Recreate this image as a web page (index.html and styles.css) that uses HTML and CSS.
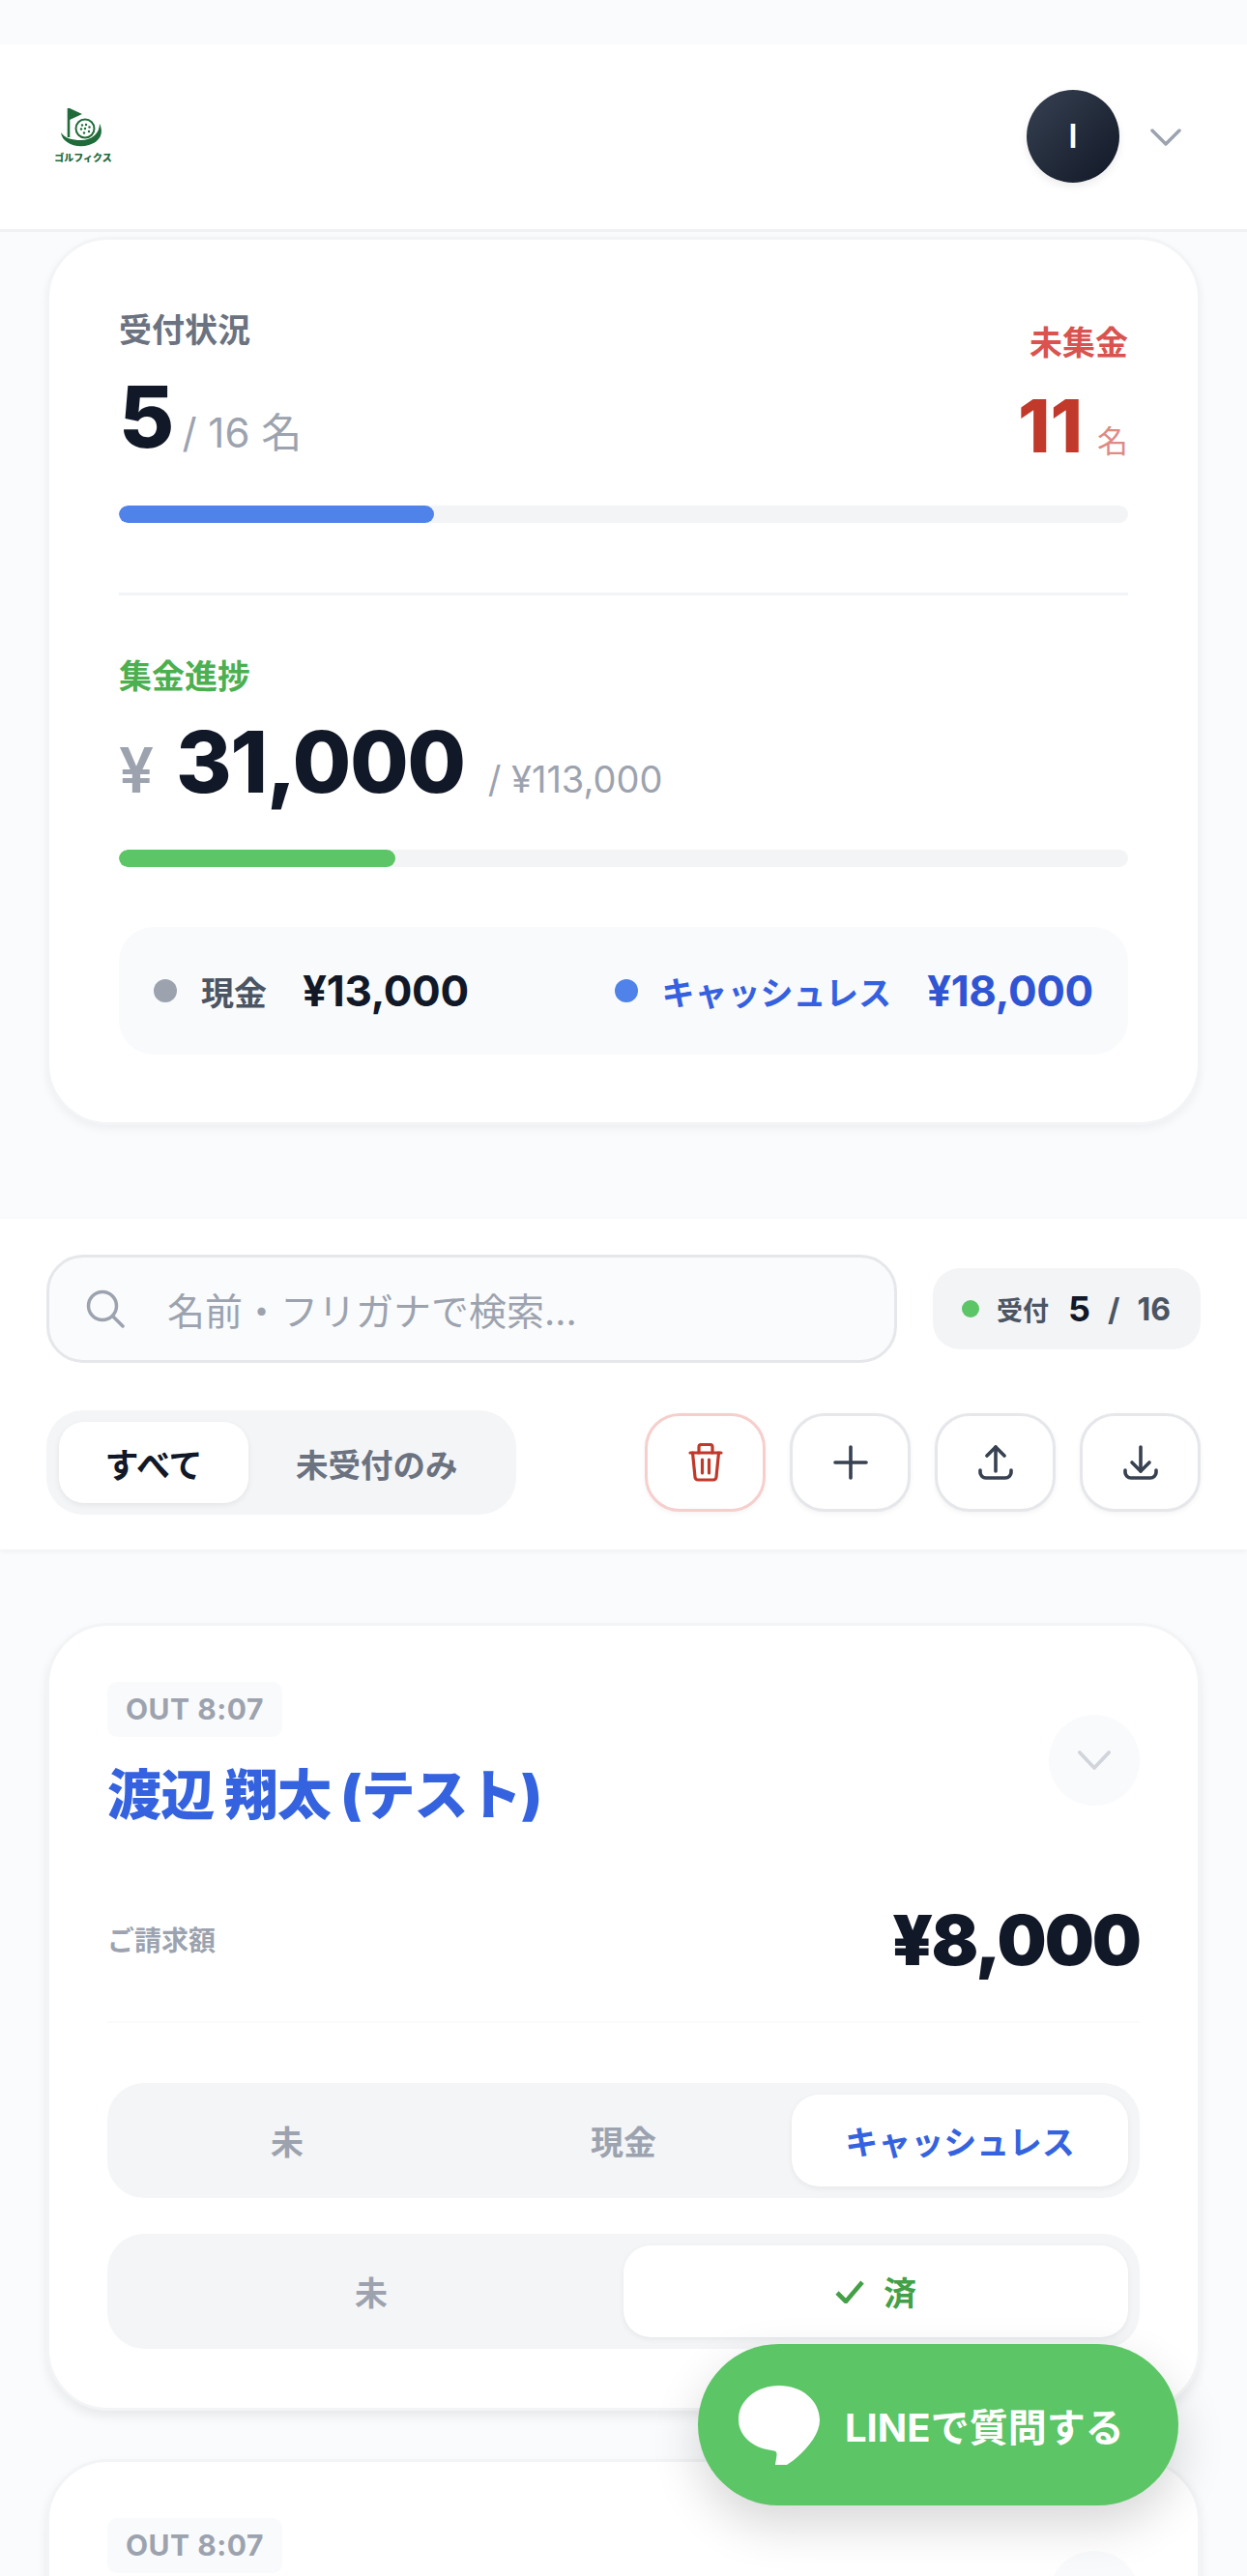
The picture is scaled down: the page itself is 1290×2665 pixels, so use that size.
FILE: index.html
```html
<!DOCTYPE html>
<html lang="ja">
<head>
    <meta charset="UTF-8">
    <meta name="viewport" content="width=device-width, initial-scale=1.0">
    <title>受付管理</title>
    <link rel="stylesheet" href="styles.css">
</head>
<body>
    <header class="site-header">
        <div class="logo">
            <svg class="logo-mark" viewBox="0 0 54 42" width="54" height="42">
                <path d="M12 0 L12 30" stroke="#1f6b3a" stroke-width="2.6" fill="none"/>
                <path d="M13 0 L26 6 L13 12 Z" fill="#1f6b3a"/>
                <circle cx="29" cy="21" r="9.5" fill="#fff" stroke="#1f6b3a" stroke-width="2"/>
                <g fill="#1f6b3a">
                    <circle cx="26" cy="17.5" r="1.2"/><circle cx="30" cy="17" r="1.2"/><circle cx="33.5" cy="19.5" r="1.2"/>
                    <circle cx="25" cy="21.5" r="1.2"/><circle cx="29" cy="21" r="1.2"/><circle cx="33" cy="24" r="1.2"/>
                    <circle cx="28" cy="25.5" r="1.2"/>
                </g>
                <path d="M4 25 C5 36 20 42 33 38 C44 35 49 26 44 16 C44 26 36 33 25 33 C15 33 8 31 4 25 Z" fill="#1f6b3a"/>
            </svg>
            <span class="logo-text">ゴルフィクス</span>
        </div>
        <div class="user-menu">
            <div class="avatar">I</div>
            <svg class="user-chevron" viewBox="0 0 32 18" width="32" height="18">
                <path d="M2 2 L16 16 L30 2" stroke="#9ca3af" stroke-width="3.5" fill="none" stroke-linecap="round" stroke-linejoin="round"/>
            </svg>
        </div>
    </header>

    <section class="summary-card">
        <div class="summary-top">
            <div>
                <div class="label label-gray">受付状況</div>
                <div class="count-line"><span class="count-big">5</span><span class="count-sub">/ 16 名</span></div>
            </div>
            <div class="unpaid">
                <div class="label label-red">未集金</div>
                <div class="count-line"><span class="unpaid-big">11</span><span class="unpaid-unit">名</span></div>
            </div>
        </div>
        <div class="bar"><div class="bar-fill bar-blue" style="width: 31.25%"></div></div>
        <div class="summary-divider"></div>
        <div class="label label-green">集金進捗</div>
        <div class="money-line">
            <span class="money-yen">¥</span><span class="money-big">31,000</span><span class="money-sub">/ ¥113,000</span>
        </div>
        <div class="bar"><div class="bar-fill bar-green" style="width: 27.4%"></div></div>
        <div class="breakdown">
            <div class="breakdown-item">
                <span class="dot dot-gray"></span><span class="breakdown-name">現金</span><span class="breakdown-value">¥13,000</span>
            </div>
            <div class="breakdown-item blue">
                <span class="dot dot-blue"></span><span class="breakdown-name">キャッシュレス</span><span class="breakdown-value">¥18,000</span>
            </div>
        </div>
    </section>

    <section class="toolbar">
        <div class="toolbar-row">
            <div class="search">
                <svg viewBox="0 0 40 40" width="40" height="40">
                    <circle cx="17" cy="17" r="14.5" stroke="#9ca3af" stroke-width="3.5" fill="none"/>
                    <path d="M28 28 L38 38" stroke="#9ca3af" stroke-width="3.5" stroke-linecap="round"/>
                </svg>
                <span class="search-text">名前・フリガナで検索...</span>
            </div>
            <div class="status-pill">
                <span class="status-dot"></span>
                <span class="status-label">受付</span>
                <span class="status-num">5</span>
                <span class="status-total">/</span>
                <span class="status-total">16</span>
            </div>
        </div>
        <div class="toolbar-row toolbar-row-2">
            <div class="filter">
                <div class="filter-item active">すべて</div>
                <div class="filter-item">未受付のみ</div>
            </div>
            <div class="icon-buttons">
                <div class="icon-btn danger">
                    <svg viewBox="0 0 36 40" width="36" height="40" fill="none" stroke="#c0392b" stroke-width="3.2" stroke-linecap="round" stroke-linejoin="round">
                        <path d="M2 10 H34"/>
                        <path d="M11 10 V4 a2.5 2.5 0 0 1 2.5-2.5 h9 a2.5 2.5 0 0 1 2.5 2.5 V10"/>
                        <path d="M4.5 10 L7 35 a3 3 0 0 0 3 3 H26 a3 3 0 0 0 3-3 L31.5 10"/>
                        <path d="M14.5 17 V31"/>
                        <path d="M21.5 17 V31"/>
                    </svg>
                </div>
                <div class="icon-btn">
                    <svg viewBox="0 0 36 36" width="36" height="36" fill="none" stroke="#374151" stroke-width="3.6" stroke-linecap="round">
                        <path d="M18 2 V34"/>
                        <path d="M2 18 H34"/>
                    </svg>
                </div>
                <div class="icon-btn">
                    <svg viewBox="0 0 36 36" width="36" height="36" fill="none" stroke="#374151" stroke-width="3.6" stroke-linecap="round" stroke-linejoin="round">
                        <path d="M18 27 V2"/>
                        <path d="M9 11 L18 2 L27 11"/>
                        <path d="M2 26 v2 a6 6 0 0 0 6 6 h20 a6 6 0 0 0 6-6 v-2"/>
                    </svg>
                </div>
                <div class="icon-btn">
                    <svg viewBox="0 0 36 36" width="36" height="36" fill="none" stroke="#374151" stroke-width="3.6" stroke-linecap="round" stroke-linejoin="round">
                        <path d="M18 2 V27"/>
                        <path d="M9 18 L18 27 L27 18"/>
                        <path d="M2 26 v2 a6 6 0 0 0 6 6 h20 a6 6 0 0 0 6-6 v-2"/>
                    </svg>
                </div>
            </div>
        </div>
    </section>

    <main class="player-list">
        <article class="player-card">
            <div class="player-head">
                <div>
                    <span class="tee-tag">OUT 8:07</span>
                    <h2 class="player-name">渡辺 翔太 (テスト)</h2>
                </div>
                <div class="expand">
                    <svg viewBox="0 0 36 22" width="34" height="21">
                        <path d="M2 2 L18 19 L34 2" stroke="#d1d5db" stroke-width="4" fill="none" stroke-linecap="round" stroke-linejoin="round"/>
                    </svg>
                </div>
            </div>
            <div class="bill-row">
                <span class="bill-label">ご請求額</span>
                <span class="bill-amount">¥8,000</span>
            </div>
            <div class="seg seg-three">
                <div class="seg-item">未</div>
                <div class="seg-item">現金</div>
                <div class="seg-item active blue-text">キャッシュレス</div>
            </div>
            <div class="seg seg-two">
                <div class="seg-item dim">未</div>
                <div class="seg-item active green-text">
                    <svg viewBox="0 0 30 24" width="30" height="24">
                        <path d="M2 13 L11 22 L28 2" stroke="#43a047" stroke-width="4.6" fill="none"/>
                    </svg>
                    済
                </div>
            </div>
        </article>
        <article class="player-card">
            <div class="player-head">
                <div>
                    <span class="tee-tag">OUT 8:07</span>
                    <h2 class="player-name">&nbsp;</h2>
                </div>
                <div class="expand">
                    <svg viewBox="0 0 36 22" width="34" height="21">
                        <path d="M2 2 L18 19 L34 2" stroke="#d1d5db" stroke-width="4" fill="none" stroke-linecap="round" stroke-linejoin="round"/>
                    </svg>
                </div>
            </div>
        </article>
    </main>

    <a class="line-button" href="#">
        <svg viewBox="0 0 84 82" width="84" height="82">
            <path d="M42 0 C65 0 84 15 84 36 C84 52 66 72 50 82 L38 82 C38.5 78 39.5 74 39.5 71 C39.5 68 38 67.5 34 67 C14 64 0 52 0 35 C0 15 19 0 42 0 Z" fill="#fff"/>
        </svg>
        <span>LINEで質問する</span>
    </a>
</body>
</html>
```

FILE: styles.css
```css
* {
    box-sizing: border-box;
}
html, body {
    height: 2665px;
    overflow: hidden;
}
body {
    margin: 0;
    padding-top: 46px;
    position: relative;
    background-color: #fafbfc;
    color: #111827;
    font-family: Inter, "Noto Sans CJK JP", sans-serif;
}

/* header */
.site-header {
    height: 194px;
    padding: 0 68px 2px 46px;
    display: flex;
    align-items: center;
    justify-content: space-between;
    background: white;
    border-bottom: 3px solid #f0f1f4;
}
.logo {
    width: 80px;
    height: 78px;
    display: flex;
    flex-direction: column;
    align-items: center;
    justify-content: center;
}
.logo-mark {
    display: block;
}
.logo-text {
    margin-top: 4px;
    font-size: 10px;
    line-height: 11px;
    font-weight: 900;
    white-space: nowrap;
    color: #1f6b3a;
}
.user-menu {
    display: flex;
    align-items: center;
    gap: 32px;
}
.user-chevron {
    margin-top: 2px;
}
.avatar {
    width: 96px;
    height: 96px;
    border-radius: 50%;
    display: flex;
    align-items: center;
    justify-content: center;
    background: linear-gradient(135deg, #374151, #111827);
    box-shadow: 0 4px 8px rgba(0, 0, 0, 0.08);
    color: white;
    font-size: 34px;
    font-weight: 600;
}

/* summary */
.summary-card {
    height: 919px;
    margin: 5px 48px 0;
    padding: 72px 72px 0;
    background: white;
    border: 3px solid #f3f4f6;
    border-radius: 64px;
    box-shadow: 0 4px 10px rgba(0, 0, 0, 0.05);
}
.summary-top {
    display: flex;
    justify-content: space-between;
    height: 203px;
}
.label {
    font-size: 34px;
    line-height: 44px;
    font-weight: 600;
}
.label-gray {
    color: #6b7280;
}
.label-red {
    margin-top: 13px;
    color: #d9534f;
}
.label-green {
    color: #4caf50;
}
.count-line {
    display: flex;
    align-items: baseline;
    margin-top: 17px;
}
.count-big {
    font-size: 88px;
    line-height: 100px;
    font-weight: 800;
}
.count-sub {
    margin-left: 8px;
    font-size: 42px;
    color: #9ca3af;
}
.unpaid {
    text-align: right;
}
.unpaid .count-line {
    justify-content: flex-end;
    margin-top: 18px;
}
.unpaid-big {
    font-size: 76px;
    line-height: 90px;
    font-weight: 800;
    color: #c0392b;
}
.unpaid-unit {
    margin-left: 15px;
    font-size: 32px;
    color: #e08a84;
}
.bar {
    height: 18px;
    border-radius: 9px;
    background: #f3f4f6;
    overflow: hidden;
}
.bar-fill {
    height: 100%;
    border-radius: 9px;
}
.bar-blue {
    background: #4f83ea;
}
.bar-green {
    background: #5cc566;
}
.summary-divider {
    height: 3px;
    margin: 72px 0 62px;
    background: #f3f4f6;
}
.money-line {
    display: flex;
    align-items: baseline;
    height: 112px;
    margin-top: 10px;
    margin-bottom: 35px;
}
.money-yen {
    font-size: 64px;
    font-weight: 600;
    color: #9ca3af;
}
.money-big {
    margin-left: 23px;
    font-size: 88px;
    line-height: 112px;
    font-weight: 800;
    letter-spacing: -1.5px;
}
.money-sub {
    margin-left: 24px;
    font-size: 38px;
    color: #9ca3af;
}
.breakdown {
    height: 132px;
    margin-top: 62px;
    padding: 0 36px;
    display: flex;
    align-items: center;
    justify-content: space-between;
    background: #f9fafb;
    border-radius: 36px;
}
.breakdown-item {
    display: flex;
    align-items: center;
    color: #4b5563;
}
.breakdown-item.blue {
    color: #3560e0;
}
.dot {
    width: 24px;
    height: 24px;
    border-radius: 50%;
    margin-right: 25px;
}
.dot-gray {
    background: #9ca3af;
}
.dot-blue {
    background: #4f83ea;
}
.breakdown-name {
    font-size: 34px;
    font-weight: 600;
}
.breakdown-value {
    margin-left: 37px;
    font-size: 44px;
    font-weight: 700;
    letter-spacing: -0.3px;
    color: #111827;
}
.blue .breakdown-value {
    color: #2f55d4;
}

/* search and filters */
.toolbar {
    margin-top: 97px;
    height: 342px;
    padding: 37px 48px 0 48px;
    background: white;
    box-shadow: 0 2px 6px rgba(0, 0, 0, 0.05);
}
.toolbar-row {
    display: flex;
    align-items: center;
    justify-content: space-between;
}
.toolbar-row-2 {
    margin-top: 49px;
}
.search {
    width: 880px;
    height: 112px;
    padding-left: 38px;
    display: flex;
    align-items: center;
    gap: 44px;
    background: #fafbfc;
    border: 3px solid #e5e7eb;
    border-radius: 38px;
}
.search-text {
    font-size: 39px;
    color: #9ca3af;
}
.status-pill {
    width: 277px;
    height: 84px;
    padding-left: 30px;
    display: flex;
    align-items: center;
    background: #f3f4f6;
    border-radius: 28px;
}
.status-dot {
    width: 18px;
    height: 18px;
    border-radius: 50%;
    background: #5cc566;
}
.status-label {
    margin-left: 18px;
    font-size: 27px;
    font-weight: 600;
    color: #4b5563;
}
.status-num {
    margin-left: 20px;
    font-size: 36px;
    font-weight: 700;
}
.status-total {
    margin-left: 18px;
    font-size: 32px;
    font-weight: 700;
    color: #4b5563;
}
.filter {
    width: 486px;
    height: 108px;
    padding: 12px 13px;
    display: flex;
    background: #f4f5f7;
    border-radius: 38px;
}
.filter-item {
    display: flex;
    align-items: center;
    justify-content: center;
    padding-left: 49px;
    font-size: 33.5px;
    font-weight: 600;
    color: #6b7280;
}
.filter-item.active {
    width: 196px;
    padding: 0;
    font-size: 35px;
    background: white;
    border-radius: 26px;
    box-shadow: 0 2px 6px rgba(0, 0, 0, 0.07);
    color: #111827;
}
.icon-buttons {
    display: flex;
    gap: 25px;
}
.icon-btn {
    width: 125px;
    height: 102px;
    display: flex;
    align-items: center;
    justify-content: center;
    background: white;
    border: 3px solid #e5e7eb;
    border-radius: 36px;
    box-shadow: 0 2px 5px rgba(0, 0, 0, 0.05);
}
.icon-btn.danger {
    border-color: #f6cfcc;
}

/* player cards */
.player-list {
    padding: 76px 48px 0;
}
.player-card {
    height: 815px;
    margin-bottom: 50px;
    padding: 58px 60px 0;
    background: white;
    border: 3px solid #f3f4f6;
    border-radius: 64px;
    box-shadow: 0 6px 12px rgba(0, 0, 0, 0.07);
}
.player-head {
    display: flex;
    align-items: center;
    justify-content: space-between;
}
.tee-tag {
    display: inline-block;
    height: 57px;
    padding: 0 19px;
    line-height: 57px;
    background: #f9fafb;
    border-radius: 10px;
    font-size: 30px;
    font-weight: 700;
    letter-spacing: 0.5px;
    color: #9ca3af;
}
.player-name {
    margin: 20px 0 0;
    font-size: 56px;
    line-height: 80px;
    font-weight: 900;
    letter-spacing: -0.8px;
    color: #3563e0;
}
.expand {
    width: 94px;
    height: 94px;
    margin-top: 5px;
    border-radius: 50%;
    display: flex;
    align-items: center;
    justify-content: center;
    background: #f9fafb;
}
.bill-row {
    height: 146px;
    margin-top: 50px;
    padding-bottom: 26px;
    display: flex;
    align-items: center;
    justify-content: space-between;
    border-bottom: 2px solid #f9fafb;
}
.bill-label {
    font-size: 28px;
    font-weight: 700;
    color: #9ca3af;
}
.bill-amount {
    font-size: 72px;
    font-weight: 900;
    letter-spacing: -2px;
}
.seg {
    height: 119px;
    padding: 12px;
    display: grid;
    background: #f4f5f7;
    border-radius: 38px;
}
.seg-three {
    margin-top: 62px;
    grid-template-columns: repeat(3, 1fr);
}
.seg-two {
    margin-top: 37px;
    grid-template-columns: repeat(2, 1fr);
}
.seg-item {
    display: flex;
    align-items: center;
    justify-content: center;
    gap: 20px;
    font-size: 34px;
    font-weight: 600;
    color: #9ca3af;
}
.seg-item.active {
    background: white;
    border-radius: 28px;
    box-shadow: 0 2px 6px rgba(0, 0, 0, 0.06);
}
.blue-text {
    color: #3563e0;
}
.green-text {
    color: #43a047;
}

/* floating button */
.line-button {
    position: absolute;
    left: 722px;
    top: 2425px;
    width: 497px;
    height: 167px;
    padding-left: 42px;
    display: flex;
    align-items: center;
    gap: 26px;
    background: #5cc566;
    border-radius: 84px;
    box-shadow: 0 20px 50px rgba(0, 0, 0, 0.16);
    color: white;
    font-size: 40px;
    font-weight: 700;
    text-decoration: none;
}
```
